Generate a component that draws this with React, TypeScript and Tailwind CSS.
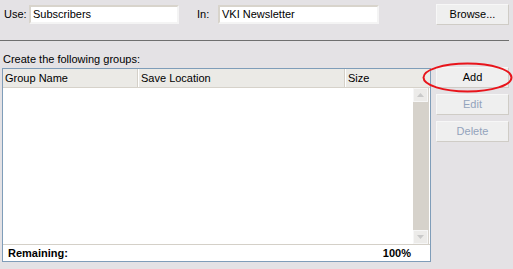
import React from 'react';

const font = { fontFamily: '"Liberation Sans", Arial, sans-serif' };

const XpButton: React.FC<{ label: string; disabled?: boolean }> = ({ label, disabled }) => (
  <button
    className={
      'w-[73px] h-[21px] text-[11px] leading-none bg-[#efefef] border border-[#f7f7f7] border-r-[#cfccc6] border-b-[#cfccc6] ' +
      (disabled ? 'text-[#93a3bc]' : 'text-black')
    }
  >
    {label}
  </button>
);

const TextBox: React.FC<{ value: string; width: string }> = ({ value, width }) => (
  <div
    className={
      width +
      ' h-[19px] bg-white border-2 border-t-[#d8d4cc] border-l-[#d8d4cc] border-r-[#f4f4f4] border-b-[#f4f4f4] flex items-center pl-[2px] text-[11px] text-black'
    }
  >
    {value}
  </div>
);

export default function App() {
  return (
    <div className="relative w-[513px] h-[269px] bg-[#e4e2e5] text-black overflow-hidden" style={font}>
      {/* top row */}
      <div className="flex items-center h-[22px] mt-[3px] pl-[4px] text-[11px]">
        <span className="w-[25px]">Use:</span>
        <TextBox value="Subscribers" width="w-[150px]" />
        <span className="ml-[18px] w-[21px]">In:</span>
        <TextBox value="VKI Newsletter" width="w-[161px]" />
        <div className="ml-[57px]">
          <XpButton label="Browse..." />
        </div>
      </div>

      <div className="mt-[15px] w-[509px] h-px bg-[#6f6f6f]" />

      <div className="mt-[12px] pl-[3px] text-[11px] leading-[13px]">Create the following groups:</div>

      <div className="flex mt-[2px]">
        {/* list view */}
        <div className="ml-[2px] w-[429px] h-[194px] border border-[#7f9db9] bg-white flex flex-col">
          <div className="flex h-[19px] bg-[#ebeae6] border-b border-[#d6d2ca] text-[11px]">
            <div className="w-[135px] flex items-center pl-[2px] border-r border-[#d4d0c8] shadow-[1px_0_0_#fff]">Group Name</div>
            <div className="w-[207px] flex items-center pl-[3px] border-r border-[#d4d0c8] shadow-[1px_0_0_#fff]">Save Location</div>
            <div className="flex-1 flex items-center pl-[3px]">Size</div>
          </div>
          <div className="flex-1 flex">
            <div className="flex-1" />
            <div className="w-[16px] bg-[#d6d2cb] flex flex-col justify-between mr-px">
              <div className="h-[14px] w-[15px] bg-[#ecebe9] border border-[#f6f6f6] flex items-center justify-center">
                <svg width="7" height="4" viewBox="0 0 7 4">
                  <path d="M0 4 L3.5 0 L7 4 Z" fill="#c9c9c9" />
                </svg>
              </div>
              <div className="h-[14px] w-[15px] bg-[#ecebe9] border border-[#f6f6f6] flex items-center justify-center">
                <svg width="7" height="4" viewBox="0 0 7 4">
                  <path d="M0 0 L3.5 4 L7 0 Z" fill="#c9c9c9" />
                </svg>
              </div>
            </div>
          </div>
          <div className="h-[17px] border-t border-[#d4d0c8] flex items-center justify-between pl-[5px] pr-[19px] text-[11px] font-bold">
            <span>Remaining:</span>
            <span>100%</span>
          </div>
        </div>

        {/* buttons */}
        <div className="ml-[5px] flex flex-col gap-[6px] -mt-px">
          <XpButton label="Add" />
          <XpButton label="Edit" disabled />
          <XpButton label="Delete" disabled />
        </div>
      </div>

      {/* red highlight */}
      <svg className="absolute left-[422px] top-[62px]" width="91" height="31" viewBox="0 0 91 31">
        <ellipse cx="45.5" cy="15.5" rx="44" ry="14" fill="none" stroke="#e8141b" strokeWidth="2" />
      </svg>
    </div>
  );
}
